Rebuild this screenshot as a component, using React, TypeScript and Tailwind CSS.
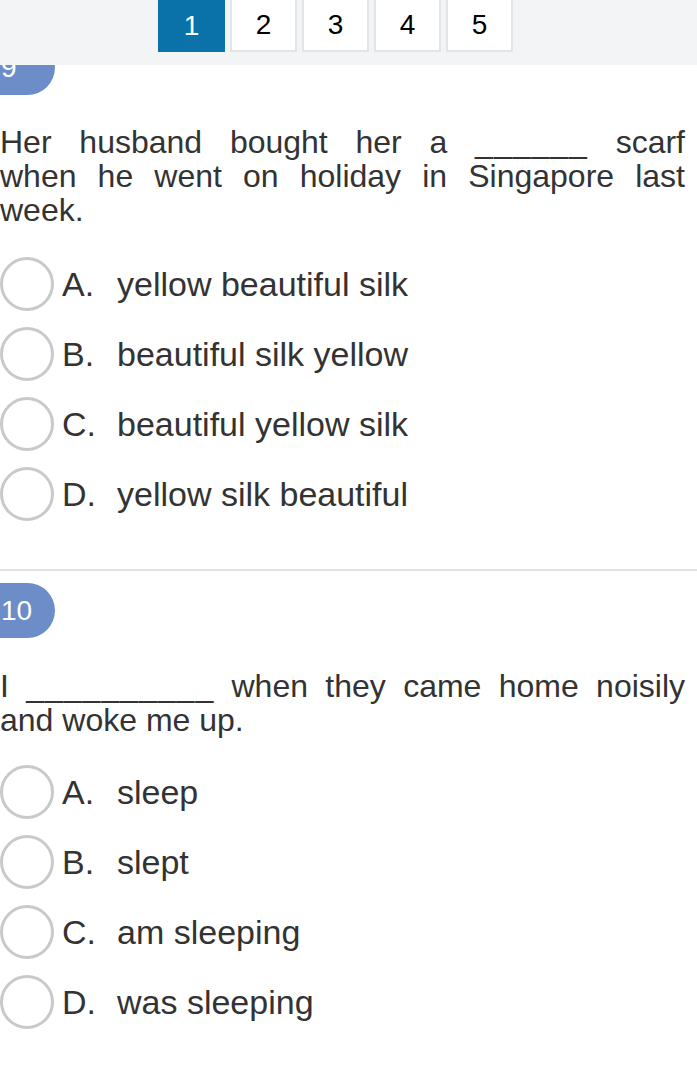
import React from "react";

type Question = {
  num: number;
  lines: React.ReactNode[];
  options: string[];
};

const QUESTIONS: Question[] = [
  {
    num: 9,
    lines: [
      <>
        Her husband bought her a <span className="tracking-[1px]">______</span> scarf
      </>,
      <>when he went on holiday in Singapore last</>,
      <>week.</>,
    ],
    options: ["yellow beautiful silk", "beautiful silk yellow", "beautiful yellow silk", "yellow silk beautiful"],
  },
  {
    num: 10,
    lines: [
      <>
        I <span className="tracking-[1px]">__________</span> when they came home noisily
      </>,
      <>and woke me up.</>,
    ],
    options: ["sleep", "slept", "am sleeping", "was sleeping"],
  },
];

const LETTERS = ["A.", "B.", "C.", "D."];

function Pager() {
  return (
    <div className="fixed top-0 left-0 right-0 z-10 h-[65px] bg-[#f3f4f6]">
      <div className="flex gap-[5px] pl-[158px]">
        {[1, 2, 3, 4, 5].map((n) => (
          <div
            key={n}
            className={`flex h-[52px] w-[67px] items-center justify-center text-[28px] ${
              n === 1 ? "bg-[#0a72a8] text-white" : "border-2 border-t-0 border-[#e2e4e6] bg-white text-black"
            }`}
          >
            {n}
          </div>
        ))}
      </div>
    </div>
  );
}

function QuestionBlock({ q, first }: { q: Question; first?: boolean }) {
  return (
    <section className={first ? "" : "border-t-2 border-[#e3e3e3] pt-[12px]"}>
      <div className="flex h-[55px] w-[55px] items-center rounded-r-full bg-[#6c8dc8] pl-[1px] text-[28px] text-white">
        {q.num}
      </div>
      <div className={`${first ? "mt-[30px]" : "mt-[31px]"} pr-[12px] text-[32px] leading-[34px] text-[#333]`}>
        {q.lines.map((line, i) => (
          <span
            key={i}
            className={`block whitespace-nowrap ${i < q.lines.length - 1 ? "text-justify [text-align-last:justify]" : ""}`}
          >
            {line}
          </span>
        ))}
      </div>
      <div className={`${first ? "mt-[30px]" : "mt-[28px]"} flex flex-col gap-[16px] pb-[48px]`}>
        {q.options.map((opt, i) => (
          <label key={opt} className="flex h-[54px] items-center">
            <span className="h-[54px] w-[54px] shrink-0 rounded-full border-[3px] border-[#c9c9c9] bg-white" />
            <span className="ml-[8px] w-[55px] text-[34px] text-[#333]">{LETTERS[i]}</span>
            <span className="text-[34px] text-[#333]">{opt}</span>
          </label>
        ))}
      </div>
    </section>
  );
}

export default function App() {
  return (
    <div className="min-h-[1067px] bg-white font-['Liberation_Sans',Arial,sans-serif]">
      <Pager />
      <div className="pt-[40px]">
        {QUESTIONS.map((q, i) => (
          <QuestionBlock key={q.num} q={q} first={i === 0} />
        ))}
      </div>
    </div>
  );
}
